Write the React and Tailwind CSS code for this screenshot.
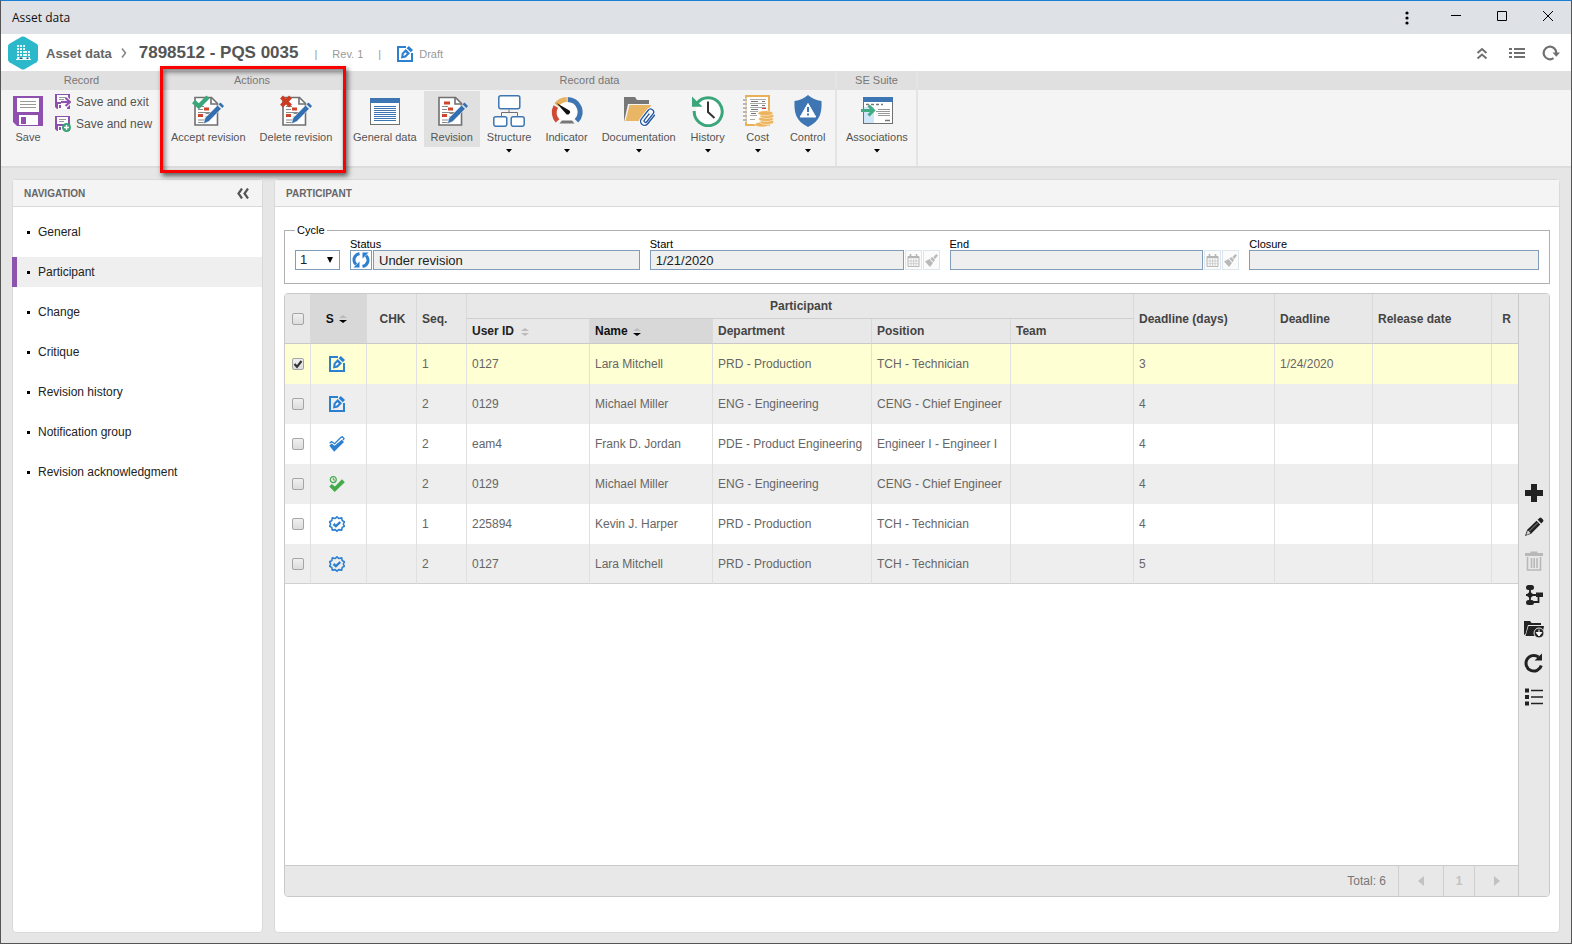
import { useState } from "react";

const NAV_ITEMS = [
    "General",
    "Participant",
    "Change",
    "Critique",
    "Revision history",
    "Notification group",
    "Revision acknowledgment",
];

const PARTICIPANTS = [
    { status: "draft", seq: 1, userId: "0127", name: "Lara Mitchell", department: "PRD - Production", position: "TCH - Technician", days: 3, deadline: "1/24/2020" },
    { status: "draft", seq: 2, userId: "0129", name: "Michael Miller", department: "ENG - Engineering", position: "CENG - Chief Engineer", days: 4 },
    { status: "doubleCheck", seq: 2, userId: "eam4", name: "Frank D. Jordan", department: "PDE - Product Engineering", position: "Engineer I - Engineer I", days: 4 },
    { status: "timedCheck", seq: 2, userId: "0129", name: "Michael Miller", department: "ENG - Engineering", position: "CENG - Chief Engineer", days: 4 },
    { status: "seal", seq: 1, userId: "225894", name: "Kevin J. Harper", department: "PRD - Production", position: "TCH - Technician", days: 4 },
    { status: "seal", seq: 2, userId: "0127", name: "Lara Mitchell", department: "PRD - Production", position: "TCH - Technician", days: 5 },
];

/* ── status icons (16px) ── */

const DraftIcon = () => (
    <svg width="16" height="16" viewBox="0 0 16 16">
        <path d="M9 1H1v14h14V7" fill="none" stroke="#2d7fd0" strokeWidth="2" />
        <path d="M4 12.500l.7-5.200L8.700 3l4.300 4.200-4.200 4.200z" fill="#2d7fd0" />
        <path d="M9.600 2.200L11.800 0l4.200 4.100-2.200 2.200z" fill="#2d7fd0" />
        <path d="M6.300 10l.6-2.200L8.600 6.300l1.200 1.200-1.700 1.800z" fill="#fff" />
    </svg>
);

const DoubleCheckIcon = () => (
    <svg width="16" height="16" viewBox="0 0 16 16">
        <path d="M.3 9.800l2.300-2.300 2.900 2.300L12.800 3.800l2.200 2.300L5.200 15.800z" fill="#2d7fd0" />
        <path d="M.6 7.200l2-1.700 3 2.200L12 1.400l1.400-.6L15 2.600 14 4" fill="none" stroke="#2d7fd0" strokeWidth="1.300" />
    </svg>
);

const TimedCheckIcon = () => (
    <svg width="16" height="16" viewBox="0 0 16 16">
        <path d="M.3 10.500l2.400-2.600 3.200 2.700L13 3.300l2.800 2.900L5.700 15.900z" fill="#43ab4a" />
        <circle cx="4.300" cy="3.600" r="3" fill="none" stroke="#43ab4a" strokeWidth="1.200" />
        <path d="M4.300 2V4H6" fill="none" stroke="#43ab4a" />
    </svg>
);

const SealIcon = () => (
    <svg width="16" height="16" viewBox="0 0 16 16">
        <path
            d="M8 .8l1.800 1.700 2.900-.6.500 2.700 2.200 1.200L14.300 8l1.100 2.300-2.200 1.100-.5 2.700-2.900-.5L8 15.200l-1.800-1.600-2.900.5-.5-2.700-2.200-1.100L1.700 8 .6 5.800l2.200-1.200.5-2.700 2.900.6z"
            fill="none" stroke="#2d7fd0" strokeWidth="1.600" strokeLinejoin="round"
        />
        <path d="M4.500 8l2.400 2.200L11.300 6" fill="none" stroke="#2d7fd0" strokeWidth="2.400" />
    </svg>
);

const STATUS_ICONS = {
    draft: DraftIcon,
    doubleCheck: DoubleCheckIcon,
    timedCheck: TimedCheckIcon,
    seal: SealIcon,
};

/* ── ribbon icons (32px) ── */

const SaveIcon = () => (
    <svg width="32" height="32" viewBox="0 0 32 32">
        <path d="M1 1h30v30H5l-4-4z" fill="#8e4fae" />
        <rect x="5" y="3" width="22" height="14" fill="#fff" />
        <path d="M8 6.500h16M8 9.500h16M8 12.500h16" stroke="#999" />
        <rect x="7" y="20" width="19" height="10" fill="#fff" />
        <rect x="9" y="22" width="5" height="7" fill="#8e4fae" />
    </svg>
);

const SmallSaveIcon = ({ variant }) => (
    <svg width="16" height="16" viewBox="0 0 16 16">
        <path d="M0 0h15v15H2l-2-2z" fill="#8e4fae" />
        <rect x="2" y="1" width="11" height="7" fill="#fff" />
        <path d="M4 3.500h7M4 5.500h5" stroke="#999" />
        <rect x="3" y="10" width="9" height="5" fill="#fff" />
        <rect x="4" y="11" width="2" height="3" fill="#8e4fae" />
        {variant === "exit" ? (
            <>
                <path d="M6 8h9M11 4l4 4-4 4" fill="none" stroke="#f4f4f4" strokeWidth="4" />
                <path d="M6 8h9M10.500 4l4.500 4-4.500 4" fill="none" stroke="#8e4fae" strokeWidth="2" />
            </>
        ) : (
            <>
                <circle cx="11.500" cy="11.500" r="4.500" fill="#3aa378" />
                <path d="M11.500 9v5M9 11.500h5" stroke="#fff" strokeWidth="1.400" />
            </>
        )}
    </svg>
);

const RevisionIcon = ({ mark }) => (
    <svg width="32" height="32" viewBox="0 0 32 32">
        <path d="M3 2.500h16.500l6 6V30H3z" fill="#fff" stroke="#707070" strokeWidth="1.600" />
        <path d="M19 2.500v6.500h6.500" fill="none" stroke="#707070" strokeWidth="1.600" />
        <path d="M6 11.500h6M6 14.500h5M13.500 18.500h9M13.500 21.500h8M6 25h11M6 27.500h8M6 17.500h16" stroke="#8a8a8a" />
        <path d="M12 12.500h5v3h-5zM6 19h5v3H6z" fill="#d1432b" />
        {!mark && <path d="M8 6.500h6v3H8z" fill="#d1432b" />}
        <path d="M13 23L25.500 10.200l3.800 3.600L16.800 26.500 11.500 28.800z" fill="#346fb1" stroke="#f4f4f4" strokeWidth=".6" />
        <path d="M26.600 9.200l1.900-1.800 3.600 3.600-1.800 1.900z" fill="#346fb1" />
        {mark === "accept" && <path d="M1.500 6.500l5.300 4.700L16 2" fill="none" stroke="#3aa67a" strokeWidth="4.400" />}
        {mark === "delete" && <path d="M1.500 2l9 9M10.500 2l-9 9" stroke="#cb3b22" strokeWidth="4" />}
    </svg>
);

const GeneralDataIcon = () => (
    <svg width="32" height="32" viewBox="0 0 32 32">
        <rect x="1.500" y="3.500" width="29" height="26" fill="#fff" stroke="#707070" />
        <rect x="1" y="3" width="30" height="5" fill="#3d76b3" />
        <path d="M5 11.500h22M5 13.500h22M5 15.500h22M5 17.500h22M5 19.500h22M5 21.500h22M5 23.500h22M5 25.500h22" stroke="#3d76b3" />
    </svg>
);

const StructureIcon = () => (
    <svg width="32" height="32" viewBox="0 0 32 32">
        <g fill="#fff" stroke="#3d76b3" strokeWidth="1.500">
            <rect x="5.800" y=".8" width="21" height="13" rx="2" />
            <rect x=".8" y="21.800" width="13" height="9.500" rx="2" />
            <rect x="18.200" y="21.800" width="13" height="9.500" rx="2" />
        </g>
        <path d="M16 14.500v3M8.500 21v-3.500h16V21" fill="none" stroke="#707070" />
    </svg>
);

const IndicatorIcon = () => (
    <svg width="32" height="32" viewBox="0 0 32 32">
        <circle cx="16" cy="17" r="10" fill="#fff" />
        <g fill="none" strokeWidth="5">
            <path d="M6.500 25.800A12.500 12.500 0 0 1 4.800 11.500" stroke="#cf4a33" />
            <path d="M5.500 10A12.500 12.500 0 0 1 15.700 4.500" stroke="#e8b25e" />
            <path d="M16.700 4.500A12.500 12.500 0 0 1 25.500 25.800" stroke="#3d76b3" />
        </g>
        <path d="M5.500 8l12.500 7.200a2.300 2.300 0 1 1-3.200 3.200z" fill="#111" />
        <path d="M11 25.500h10l2.500 3h-15z" fill="#777" />
    </svg>
);

const DocumentationIcon = () => (
    <svg width="32" height="32" viewBox="0 0 32 32">
        <path d="M1 27V2h11l2 3h12v4H5z" fill="#777" />
        <path d="M6.500 10H28l-5.500 16H2.500z" fill="#e9b665" />
        <g transform="translate(25 22) rotate(38)" fill="none">
            <path d="M4-6V5.500a4 4 0 0 1-8 0V-5.500a3 3 0 0 1 6 0V4.500a1.500 1.500 0 0 1-3 0V-3.500" stroke="#fff" strokeWidth="3" />
            <path d="M4-6V5.500a4 4 0 0 1-8 0V-5.500a3 3 0 0 1 6 0V4.500a1.500 1.500 0 0 1-3 0V-3.500" stroke="#2458a0" strokeWidth="1.400" />
        </g>
    </svg>
);

const HistoryIcon = () => (
    <svg width="32" height="32" viewBox="0 0 32 32">
        <circle cx="17" cy="16" r="13" fill="#fff" />
        <path d="M4.800 8.500A14 14 0 1 1 2.200 16" fill="none" stroke="#3aa67a" strokeWidth="3" />
        <path d="M0 1.500v10.300h10.500z" fill="#3aa67a" />
        <path d="M16 6.500V17l6.500 6" fill="none" stroke="#333" strokeWidth="2" />
    </svg>
);

const CostIcon = () => (
    <svg width="32" height="32" viewBox="0 0 32 32">
        <rect x="4" y="1" width="23" height="29" fill="#fff" stroke="#e9b05a" strokeWidth="2" />
        <path d="M1 5h5M1 9h5M1 13h5M1 17h5M1 21h5M1 25h5" stroke="#fff" strokeWidth="3" />
        <path d="M1 5h4M1 9h4M1 13h4M1 17h4M1 21h4M1 25h4" stroke="#707070" />
        <path d="M8 4.500h16M8 8.500h16M8 12.500h16M8 16.500h8M8 20.500h7M8 24.500h5" stroke="#aaa" />
        <path d="M9 6.500h7M20 6.500h3M9 10.500h7M20 10.500h3M9 14.500h7M9 18.500h5" stroke="#777" />
        <path d="M20 13.500h4" stroke="#d1432b" />
        <g fill="#ecb45f" stroke="#fff4df" strokeWidth=".6">
            <ellipse cx="20" cy="29.500" rx="7" ry="2.500" />
            <ellipse cx="25" cy="27" rx="7" ry="2.500" />
            <ellipse cx="24" cy="24" rx="7.500" ry="2.500" />
            <ellipse cx="25" cy="21" rx="7" ry="2.500" />
            <ellipse cx="23.500" cy="18.200" rx="7.500" ry="2.500" />
        </g>
    </svg>
);

const ControlIcon = () => (
    <svg width="32" height="32" viewBox="0 0 32 32">
        <path d="M16 0c4 3.500 8 5 13.500 6C30 17 28.500 26 16 32 3.500 26 2 17 2.500 6 8 5 12 3.500 16 0z" fill="#3d76b3" />
        <path d="M16 8.500L23.800 22H8.200z" fill="#fff" stroke="#fff" strokeLinejoin="round" />
        <path d="M16 12v5M16 18.500v2" stroke="#3d76b3" strokeWidth="2" />
    </svg>
);

const AssociationsIcon = () => (
    <svg width="32" height="32" viewBox="0 0 32 32">
        <rect x="2.500" y="2.500" width="29" height="26" fill="#fff" stroke="#707070" />
        <rect x="2" y="2" width="30" height="5" fill="#3d76b3" />
        <rect x="3" y="12" width="10" height="16" fill="#cfe6f8" />
        <path d="M5 9.500h17" stroke="#777" strokeDasharray="3 2" strokeWidth="1.500" />
        <path d="M17 14.500h12M15 16.500h14M17 18.500h12M17 20.500h12" stroke="#999" />
        <path d="M24 25.500h5" stroke="#777" strokeWidth="1.500" />
        <path d="M0 15.500h12M7.500 10.500l5 5-5 5" fill="none" stroke="#43ab82" strokeWidth="3" />
    </svg>
);

/* ── ribbon ── */

function RibbonGroup({ title, className = "", children }) {
    return (
        <div className={`relative flex flex-col border-[#e4e4e4] ${className}`}>
            <h2 className="h-[19px] bg-[#e0e0e0] text-center text-[11px] leading-[19px] text-[#777]">{title}</h2>
            <div className="flex items-start pt-px pl-0.5">{children}</div>
        </div>
    );
}

function RibbonButton({ icon, label, menu = false, active = false }) {
    return (
        <button type="button" className="flex min-w-[50px] flex-col items-center whitespace-nowrap">
            <span className={`flex h-14 w-full flex-col items-center px-[7px] pt-1 text-[11px] leading-[20px] text-[#555] ${active ? "bg-[#e0e0e0]" : ""}`}>
                {icon}
                {label}
            </span>
            {menu && (
                <svg className="mt-0.5" width="6" height="4" viewBox="0 0 6 4"><path d="M0 0h6L3 3.500z" fill="#000" /></svg>
            )}
        </button>
    );
}

function SmallRibbonButton({ variant, label }) {
    return (
        <button type="button" className="flex h-[22px] items-center gap-[5px] whitespace-nowrap text-xs text-[#555]">
            <SmallSaveIcon variant={variant} />
            {label}
        </button>
    );
}

function Ribbon() {
    return (
        <div className="flex h-[97px] border-b-2 border-[#dcdcdc] bg-[#f4f4f4]">
            <RibbonGroup title="Record" className="w-[161px]">
                <RibbonButton icon={<SaveIcon />} label="Save" />
                <div className="ml-0.5">
                    <SmallRibbonButton variant="exit" label="Save and exit" />
                    <SmallRibbonButton variant="new" label="Save and new" />
                </div>
            </RibbonGroup>
            <RibbonGroup title="Actions" className="w-[182px] border-r-2">
                <RibbonButton icon={<RevisionIcon mark="accept" />} label="Accept revision" />
                <RibbonButton icon={<RevisionIcon mark="delete" />} label="Delete revision" />
                {/* highlight frame */}
                <div className="pointer-events-none absolute -top-[5px] -left-[2px] z-10 h-[107px] w-[186px] border-3 border-[#fb0000] shadow-[2px_3px_5px_rgba(0,0,0,0.6),inset_2px_3px_5px_rgba(0,0,0,0.5)]" />
            </RibbonGroup>
            <RibbonGroup title="Record data" className="w-[493px] border-r-2">
                <RibbonButton icon={<GeneralDataIcon />} label="General data" />
                <RibbonButton icon={<RevisionIcon />} label="Revision" active />
                <RibbonButton icon={<StructureIcon />} label="Structure" menu />
                <RibbonButton icon={<IndicatorIcon />} label="Indicator" menu />
                <RibbonButton icon={<DocumentationIcon />} label="Documentation" menu />
                <RibbonButton icon={<HistoryIcon />} label="History" menu />
                <RibbonButton icon={<CostIcon />} label="Cost" menu />
                <RibbonButton icon={<ControlIcon />} label="Control" menu />
            </RibbonGroup>
            <RibbonGroup title="SE Suite" className="w-[81px] border-r-2">
                <RibbonButton icon={<AssociationsIcon />} label="Associations" menu />
            </RibbonGroup>
            <div className="h-[19px] flex-1 bg-[#e0e0e0]" />
        </div>
    );
}

/* ── window bars ── */

function TitleBar() {
    return (
        <div className="flex h-[33px] items-center bg-[#dee1e6] pl-[11px] text-xs text-[#111]">
            <span className="flex-1 font-['Open_Sans',sans-serif]">Asset data</span>
            <button type="button" aria-label="Menu" className="mr-4 flex w-5 justify-center">
                <svg width="4" height="14" viewBox="0 0 4 14"><circle cx="2" cy="2" r="1.600" /><circle cx="2" cy="7" r="1.600" /><circle cx="2" cy="12" r="1.600" /></svg>
            </button>
            <button type="button" aria-label="Minimize" className="flex w-[46px] justify-center pb-1">
                <svg width="10" height="10" viewBox="0 0 10 10"><path d="M0 4.500h10" stroke="#000" /></svg>
            </button>
            <button type="button" aria-label="Maximize" className="flex w-[46px] justify-center pb-1">
                <svg width="10" height="10" viewBox="0 0 10 10"><path d="M.5.5h9v9h-9z" fill="none" stroke="#000" /></svg>
            </button>
            <button type="button" aria-label="Close" className="flex w-[46px] justify-center pb-1">
                <svg width="10" height="10" viewBox="0 0 10 10"><path d="M0 0l10 10M10 0L0 10" stroke="#000" /></svg>
            </button>
        </div>
    );
}

function Header() {
    return (
        <header className="flex h-[37px] items-center bg-white pr-[11px] pl-[7px] text-[#999]">
            <svg width="30" height="34" viewBox="0 0 30 34">
                <path d="M13.500.8q1.500-.8 3 0l12 7q1.500.9 1.500 2.400v13.600q0 1.500-1.500 2.400l-12 7q-1.500.8-3 0l-12-7Q0 25.300 0 23.800V10.200q0-1.500 1.500-2.400z" fill="#2bb8cb" />
                <path d="M9 9h8v14H9zM17 15h5v8h-5z" fill="#e8fafc" />
                <path d="M9 11.500h8M9 14.500h8M9 17.500h13M9 20.500h13M11.500 9v12M14.500 9v12M19.500 15v6" stroke="#2bb8cb" />
                <path d="M11.500 21.500h3v2h-3zM18.500 21.500h2v2h-2z" fill="#17606b" />
                <path d="M8 23.500h15" stroke="#e8fafc" />
            </svg>
            <a href="#" className="ml-2 pt-0.5 text-[13px] font-bold text-[#666]">Asset data</a>
            <svg className="ml-[9px]" width="6" height="10" viewBox="0 0 6 10"><path d="M1 .5L4.500 5 1 9.500" fill="none" stroke="#888" strokeWidth="1.600" /></svg>
            <h1 className="ml-3 text-[17px] font-bold text-[#555]">7898512 - PQS 0035</h1>
            <span className="ml-4 pt-1 text-[11px]">|</span>
            <span className="ml-[15px] pt-1 text-[11px]">Rev. 1</span>
            <span className="ml-[15px] pt-1 text-[11px]">|</span>
            <span className="ml-4 pt-0.5"><DraftIcon /></span>
            <span className="ml-1.5 pt-1 text-[11px]">Draft</span>
            <div className="ml-auto flex items-center gap-[21px]">
                <button type="button" aria-label="Collapse ribbon">
                    <svg width="12" height="14" viewBox="0 0 12 14"><path d="M1.500 7L6 3l4.500 4M1.500 12.500L6 8.500l4.500 4" fill="none" stroke="#707070" strokeWidth="2" /></svg>
                </button>
                <button type="button" aria-label="List">
                    <svg width="16" height="12" viewBox="0 0 16 12"><path d="M0 2h3M5 2h11M0 6h3M5 6h11M0 10h3M5 10h11" stroke="#707070" strokeWidth="2" /></svg>
                </button>
                <button type="button" aria-label="Refresh" className="-ml-1">
                    <svg width="18" height="16" viewBox="0 0 18 16"><path d="M11.500 13.200A6.300 6.300 0 1 1 14.300 8" fill="none" stroke="#707070" strokeWidth="2.200" /><path d="M10.500 7.500h7.500L14.300 11.800z" fill="#707070" /></svg>
                </button>
            </div>
        </header>
    );
}

/* ── panels ── */

function Navigation({ active, onSelect }) {
    return (
        <nav className="w-[251px] shrink-0 rounded-sm border border-[#d9d9d9] bg-white">
            <div className="flex h-[27px] items-center justify-between border-b border-[#d9d9d9] bg-[#f4f4f4] pr-[13px] pl-[11px]">
                <h2 className="text-[10px] font-bold text-[#666]">NAVIGATION</h2>
                <button type="button" aria-label="Collapse navigation">
                    <svg width="12" height="11" viewBox="0 0 12 11"><path d="M5 .5L1.500 5.500 5 10.500M11 .5L7.500 5.500 11 10.500" fill="none" stroke="#555" strokeWidth="2.200" /></svg>
                </button>
            </div>
            <ul className="-ml-px flex flex-col gap-2.5 pt-2.5 text-xs text-[#222]">
                {NAV_ITEMS.map((item) => (
                    <li key={item}>
                        <a
                            href="#"
                            onClick={() => onSelect(item)}
                            className={`flex h-[30px] items-center gap-2 border-l-5 pl-2.5 ${item === active ? "border-[#8e54ab] bg-[#efefef]" : "border-transparent"}`}
                        >
                            <span className="size-[3px] bg-black" />
                            {item}
                        </a>
                    </li>
                ))}
            </ul>
        </nav>
    );
}

function Field({ id, label, value = "", icon, date = false }) {
    return (
        <div className="min-w-0 flex-1">
            <label htmlFor={id} className="block pt-0.5 text-[11px] leading-[11px]">{label}</label>
            <div className="flex h-5 gap-px">
                {icon}
                <input id={id} readOnly value={value} className="h-5 min-w-0 flex-1 border border-[#7f9db9] bg-[#efefef] px-[5px] text-[13px] text-[#222]" />
                {date && (
                    <>
                        <button type="button" disabled aria-label={`Pick ${label} date`} className="flex w-[17px] items-center justify-center border border-[#dde5ee] bg-[#fbfbfb]">
                            <svg width="13" height="13" viewBox="0 0 13 13">
                                <path d="M1 2.500h11v10H1z" fill="none" stroke="#b5b5b5" />
                                <path d="M1 3.500h11M3.500 0v4M9.500 0v4" stroke="#b5b5b5" strokeWidth="1.600" />
                                <path d="M1 7h11M1 9.700h11M4 5v8M6.500 5v8M9 5v8" stroke="#c8c8c8" strokeWidth=".8" />
                            </svg>
                        </button>
                        <button type="button" disabled aria-label={`Clear ${label} date`} className="flex w-[17px] items-center justify-center border border-[#dde5ee] bg-[#fbfbfb]">
                            <svg width="13" height="13" viewBox="0 0 13 13"><path d="M0 7.500l4.500-2.500 3.500 4L5 13zM5.300 4.600l1.800-1.500L10 5.800 8.600 8.300zM8.300 3.200L11.300 0 13 1.500 10.200 5z" fill="#b9b9b9" /></svg>
                        </button>
                    </>
                )}
            </div>
        </div>
    );
}

function CycleFields() {
    return (
        <fieldset className="flex gap-2.5 border border-[#b0b0b0] px-2.5 pb-[13px] text-black">
            <legend className="-mb-px px-[2px] text-[11px] leading-[15px]">Cycle</legend>
            <div className="relative mt-[13px] h-5 w-[45px] shrink-0">
                <select aria-label="Cycle" defaultValue="1" className="block h-5 w-full appearance-none border border-[#7f9db9] bg-white pl-1 text-[13px] leading-[18px] text-[#222]">
                    <option value="1">1</option>
                </select>
                <svg className="pointer-events-none absolute top-[7px] right-[7px]" width="6" height="6" viewBox="0 0 6 6"><path d="M0 0h6L3 6z" /></svg>
            </div>
            <Field
                id="status"
                label="Status"
                value="Under revision"
                icon={
                    <span className="flex w-[22px] items-center justify-center border border-[#7f9db9] bg-white">
                        <svg width="18" height="16" viewBox="0 0 18 16">
                            <path d="M7.500 1.500C1.500 3 .5 9 4 12.500M10.500 14.500c6-1.500 7-7.500 3.500-11" fill="none" stroke="#2d7fd0" strokeWidth="3" />
                            <path d="M1.500 15.500h6V9.500zM16.500.5h-6v6z" fill="#2d7fd0" />
                        </svg>
                    </span>
                }
            />
            <Field id="start" label="Start" value="1/21/2020" date />
            <Field id="end" label="End" date />
            <Field id="closure" label="Closure" />
        </fieldset>
    );
}

function Checkbox({ label, ...props }) {
    return (
        <span className="relative mx-auto block size-3">
            <input
                type="checkbox"
                aria-label={label}
                className="peer block size-3 appearance-none rounded-[2px] border border-[#a5a5a5] bg-linear-to-b from-[#f0f0f0] to-[#dcdcdc]"
                {...props}
            />
            <svg className="pointer-events-none absolute inset-0 hidden peer-checked:block" width="12" height="12" viewBox="0 0 12 12">
                <path d="M2.500 6l2.500 2.800L9.500 3" fill="none" stroke="#333" strokeWidth="2.200" />
            </svg>
        </span>
    );
}

function SortIcon({ active = false }) {
    return (
        <svg className="inline-block" width="8" height="8" viewBox="0 0 8 8">
            <path d="M4 0l4 3H0z" fill="#bbb" />
            <path d="M0 5h8L4 8z" fill={active ? "#000" : "#bbb"} />
        </svg>
    );
}

function ParticipantTable({ selected, onToggle }) {
    const th = "border-r border-[#d9d9d9] border-b border-b-[#c9c9c9] px-[5px] text-left font-bold";
    const td = "border-r border-[#e0e0e0] px-[5px]";

    return (
        <table className="w-full table-fixed border-separate border-spacing-0 text-xs whitespace-nowrap">
            <colgroup>
                <col className="w-[26px]" />
                <col className="w-[56px]" />
                <col className="w-[50px]" />
                <col className="w-[50px]" />
                <col className="w-[123px]" />
                <col className="w-[123px]" />
                <col className="w-[159px]" />
                <col className="w-[139px]" />
                <col className="w-[123px]" />
                <col className="w-[141px]" />
                <col className="w-[98px]" />
                <col className="w-[119px]" />
                <col className="w-[27px]" />
            </colgroup>
            <thead className="bg-[#e8e8e8] text-[#444]">
                <tr className="h-[25px]">
                    <th rowSpan={2} className="border-r border-b border-[#d9d9d9] border-b-[#c9c9c9]"><Checkbox label="Select all" /></th>
                    <th rowSpan={2} className="border-r border-b border-[#d9d9d9] border-b-[#c9c9c9] bg-[#d8d8d8] pr-1 text-[#111]">S <span className="ml-0.5"><SortIcon active /></span></th>
                    <th rowSpan={2} className="border-r border-b border-[#d9d9d9] border-b-[#c9c9c9] pl-0.5">CHK</th>
                    <th rowSpan={2} className={th}>Seq.</th>
                    <th colSpan={5} className="border-r border-b border-[#d9d9d9] border-b-[#cfcfcf] pl-0.5">Participant</th>
                    <th rowSpan={2} className={th}>Deadline (days)</th>
                    <th rowSpan={2} className={th}>Deadline</th>
                    <th rowSpan={2} className={th}>Release date</th>
                    <th rowSpan={2} className="border-b border-[#c9c9c9] pl-0.5 text-center">R</th>
                </tr>
                <tr className="h-[25px]">
                    <th className={`${th} text-[#222]`}>User ID <span className="ml-1"><SortIcon /></span></th>
                    <th className={`${th} bg-[#d8d8d8] text-[#111]`}>Name <span className="ml-0.5"><SortIcon active /></span></th>
                    <th className={th}>Department</th>
                    <th className={th}>Position</th>
                    <th className={th}>Team</th>
                </tr>
            </thead>
            <tbody className="text-[#666]">
                {PARTICIPANTS.map((row, index) => {
                    const StatusIcon = STATUS_ICONS[row.status];
                    const isSelected = selected.includes(index);
                    return (
                        <tr
                            key={index}
                            className={`h-10 last:[&>td]:border-b last:[&>td]:border-b-[#d0d0d0] ${isSelected ? "bg-[#ffffd4]" : index % 2 ? "bg-[#eeeeee]" : "bg-white"}`}
                        >
                            <td className="border-r border-[#e0e0e0]">
                                <Checkbox label={`Select row ${index + 1}`} checked={isSelected} onChange={() => onToggle(index)} />
                            </td>
                            <td className="border-r border-[#e0e0e0]"><span className="flex justify-center pr-1"><StatusIcon /></span></td>
                            <td className={td} />
                            <td className={td}>{row.seq}</td>
                            <td className={td}>{row.userId}</td>
                            <td className={td}>{row.name}</td>
                            <td className={td}>{row.department}</td>
                            <td className={td}>{row.position}</td>
                            <td className={td} />
                            <td className={td}>{row.days}</td>
                            <td className={td}>{row.deadline}</td>
                            <td className={td} />
                            <td className="border-[#e0e0e0]" />
                        </tr>
                    );
                })}
            </tbody>
        </table>
    );
}

function GridFooter() {
    return (
        <div className="mt-auto flex h-[31px] items-stretch justify-end border-t border-[#c9c9c9] bg-[#e8e8e8] text-xs text-[#777]">
            <span className="flex items-center pr-3">Total: 6</span>
            <button type="button" aria-label="Previous page" className="flex w-[45px] items-center justify-center border-l border-[#cfcfcf]">
                <svg width="6" height="10" viewBox="0 0 6 10"><path d="M6 0v10L0 5z" fill="#c2c2c2" /></svg>
            </button>
            <button type="button" className="w-[31px] border-l border-[#cfcfcf] font-bold text-[#c2c2c2]">1</button>
            <button type="button" aria-label="Next page" className="flex w-[44px] items-center justify-center border-l border-[#cfcfcf]">
                <svg width="6" height="10" viewBox="0 0 6 10"><path d="M0 0v10L6 5z" fill="#c2c2c2" /></svg>
            </button>
        </div>
    );
}

const TOOLS = [
    { label: "Add", icon: <path d="M7 1h6v6h6v6h-6v6H7v-6H1V7h6z" fill="#222" /> },
    {
        label: "Edit",
        icon: (
            <>
                <path d="M1 19l2.200-6.200L12.500 3.800l3.800 3.700-9.200 9.200zM13.600 2.700l1.900-1.800q1-.8 2 .1l1.600 1.700q.8 1 0 1.900l-1.800 1.800z" fill="#222" />
                <path d="M2.700 17.500l1.300-3.700 2.200 2.300zM5.500 14l8-8" fill="#ddd" stroke="#ddd" strokeWidth=".6" />
            </>
        ),
    },
    {
        label: "Delete",
        disabled: true,
        icon: (
            <>
                <path d="M1 2h5.500V.5h7V2H19v3H1z" fill="#b8b8b8" />
                <path d="M3.500 6v13h13V6M7.500 7v10M10.200 7v10M13 7v10" fill="none" stroke="#b8b8b8" strokeWidth="1.600" />
            </>
        ),
    },
    {
        label: "Flow",
        icon: (
            <>
                <path d="M6 2v16M2 10h16M14.500 10v7H8" fill="none" stroke="#222" strokeWidth="1.800" />
                <rect x="2" y="0" width="8" height="5" rx="2.500" fill="#222" />
                <path d="M6 6.500l4 3.500-4 3.500L2 10zM12 7.500h7V12h-7z" fill="#222" />
                <rect x="2" y="15" width="8" height="5" rx="2.500" fill="#222" />
            </>
        ),
    },
    {
        label: "Import",
        icon: (
            <>
                <path d="M0 2h6l1.500 2H17v2H4L1.500 15 0 16z" fill="#222" />
                <path d="M4.500 7H20l-2 10H1.500z" fill="#222" />
                <circle cx="15" cy="14" r="5" fill="#222" stroke="#e8e8e8" />
                <path d="M15 10.500v3M12.200 13.500h5.600L15 17z" fill="#fff" stroke="#fff" />
            </>
        ),
    },
    {
        label: "Reload",
        icon: (
            <>
                <path d="M17.300 12.500A7.800 7.800 0 1 1 14.500 4" fill="none" stroke="#222" strokeWidth="3" />
                <path d="M18 .5V7.500h-7.500z" fill="#222" />
            </>
        ),
    },
    {
        label: "View list",
        icon: (
            <>
                <path d="M1 3.500h4M1 10h4M1 16.500h4" stroke="#222" strokeWidth="4" />
                <path d="M7 3.500h12M7 10h12M7 16.500h12" stroke="#222" strokeWidth="1.400" />
            </>
        ),
    },
];

function SideToolbar() {
    return (
        <div className="flex w-[31px] shrink-0 flex-col items-center justify-center border-l border-[#c9c9c9] bg-[#e8e8e8]">
            {TOOLS.map((tool) => (
                <button key={tool.label} type="button" aria-label={tool.label} disabled={tool.disabled} className="flex h-[34px] items-center">
                    <svg width="20" height="20" viewBox="0 0 20 20">{tool.icon}</svg>
                </button>
            ))}
        </div>
    );
}

export default function App() {
    const [activeItem, setActiveItem] = useState("Participant");
    const [selected, setSelected] = useState([0]);

    const handleToggle = (index) => {
        setSelected((current) =>
            current.includes(index) ? current.filter((i) => i !== index) : [...current, index]
        );
    };

    return (
        <div className="flex min-h-screen flex-col border border-[#555] border-t-[#1a7fd4] bg-[#e6e6e6] font-['Liberation_Sans',Arial,sans-serif]">
            <TitleBar />
            <Header />
            <Ribbon />

            <main className="flex flex-1 gap-[11px] px-[11px] pt-[11px] pb-2.5">
                <Navigation active={activeItem} onSelect={setActiveItem} />

                <section className="flex min-w-0 flex-1 flex-col rounded-sm border border-[#d9d9d9] bg-white">
                    <h2 className="h-[27px] border-b border-[#d9d9d9] bg-[#f4f4f4] pl-[11px] text-[10px] leading-[27px] font-bold text-[#666]">PARTICIPANT</h2>
                    <div className="flex flex-1 flex-col gap-[9px] px-[9px] pt-4 pb-[35px]">
                        <CycleFields />

                        {/* grid */}
                        <div className="flex flex-1 overflow-hidden rounded-sm border border-[#c9c9c9]">
                            <div className="flex min-w-0 flex-1 flex-col">
                                <ParticipantTable selected={selected} onToggle={handleToggle} />
                                <GridFooter />
                            </div>
                            <SideToolbar />
                        </div>
                    </div>
                </section>
            </main>
        </div>
    );
}
